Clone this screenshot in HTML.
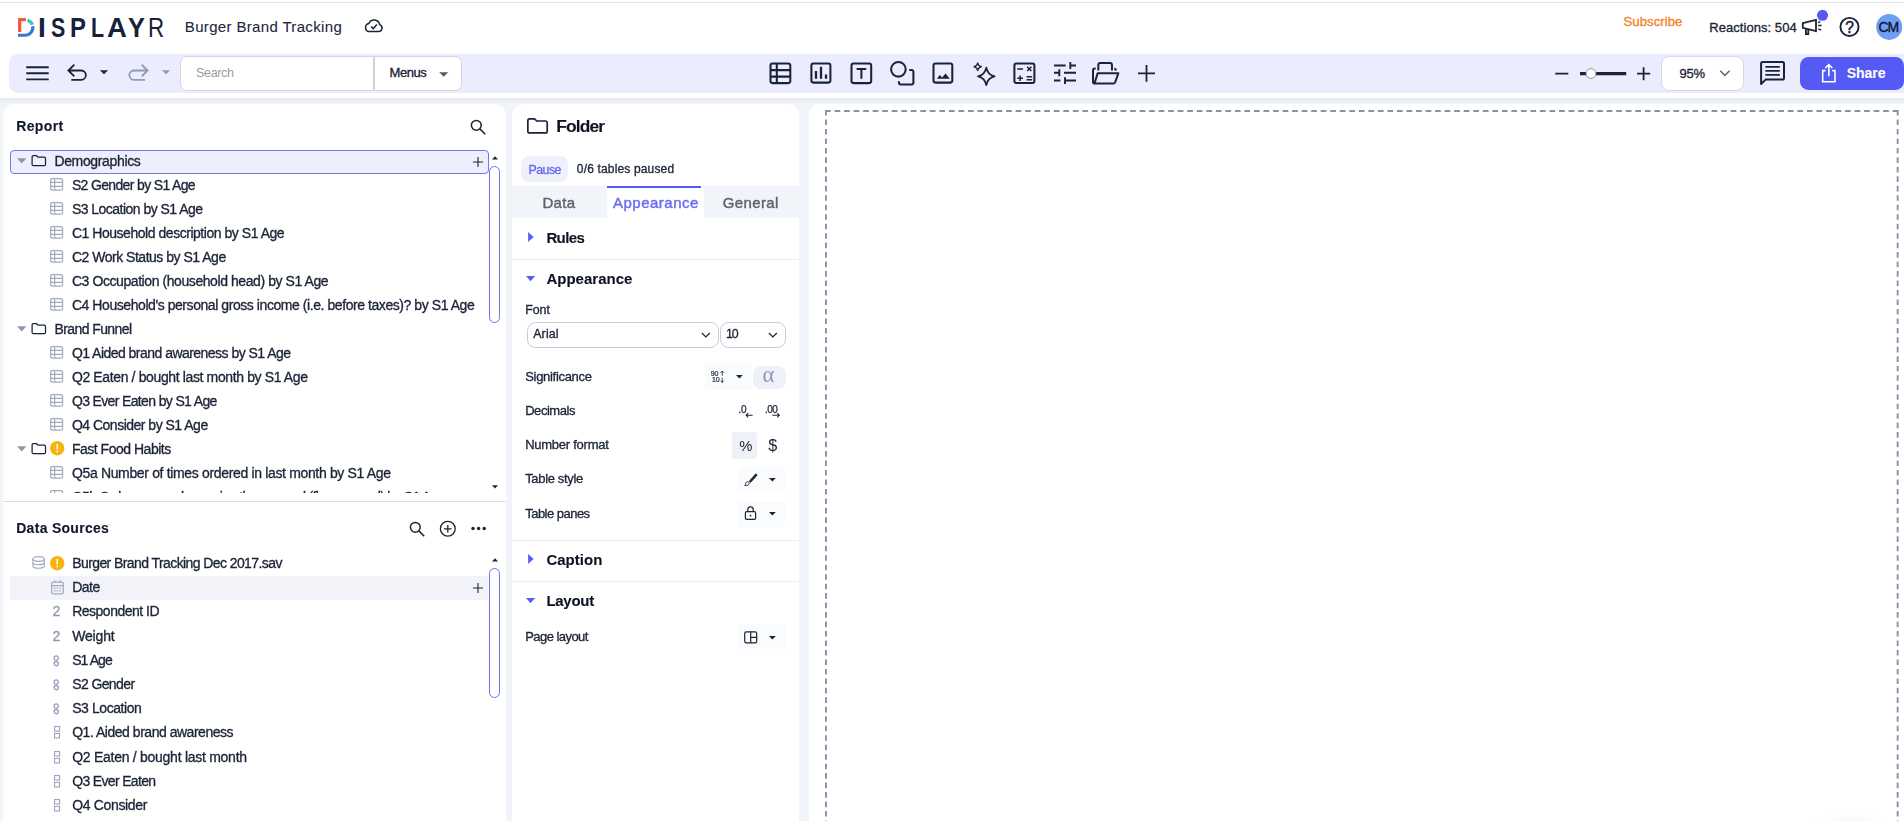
<!DOCTYPE html>
<html lang="en">
<head>
<meta charset="utf-8">
<title>Burger Brand Tracking - Displayr</title>
<style>
*{box-sizing:border-box;margin:0;padding:0}
html,body{width:1904px;height:821px;overflow:hidden;background:#fff}
body{font-family:"Liberation Sans",sans-serif;color:#1b2336;position:relative}
.abs{position:absolute}
svg{display:block;overflow:visible;position:absolute}
.t{position:absolute;white-space:nowrap;line-height:1;-webkit-text-stroke:0.32px currentColor}
#topline{left:0;top:2px;width:1904px;height:1px;background:#e0e2e0}
#toolbar{left:9px;top:54px;width:1900px;height:39px;background:#ebecfd;border-radius:9px 0 0 9px}
#bg{left:0;top:98px;width:1904px;height:730px;background:linear-gradient(#e6e9ee 0,#eef1f6 4px,#f1f4f9 7px,#f1f4f9 100%)}
.panel{position:absolute;background:#fff;border-radius:11px 11px 0 0;top:104px;height:730px}
#left{left:3px;width:503px}
#mid{left:512px;width:287px}
#canvas{left:809px;width:1110px;border-radius:11px 0 0 0}
.hr{position:absolute;height:1px;background:#eceef3}
#leftc,#midc{position:absolute;left:0;top:0;width:1904px;height:821px;will-change:transform}
.logo{position:absolute;left:0;top:13.74px;font-size:27.25px;line-height:1;color:#17213a;white-space:nowrap}
.logo span{position:absolute;top:0;transform-origin:0 0;display:block}
</style>
</head>
<body>
<div id="topline" class="abs"></div>
<div id="header">
<svg style="left:0;top:0" width="180" height="50" viewBox="0 0 180 50">
<path d="M25.9,19.6 H19.7 V32" fill="none" stroke="#ef5a41" stroke-width="3.3"/>
<path d="M27.46,20.03 A7.8,7.8 0 0 1 32.38,24.78" fill="none" stroke="#41c6c0" stroke-width="3.4"/>
<path d="M32.75,26.23 A7.8,7.8 0 0 1 25.05,35.25 H18" fill="none" stroke="#3f76d2" stroke-width="3.2"/>

</svg>
<div class="logo" aria-label="DISPLAYR"><span style="left:38.24px;transform:scaleX(1.03);font-weight:700">I</span><span style="left:51.36px;transform:scaleX(0.785);font-weight:700">S</span><span style="left:70.14px;transform:scaleX(0.875);font-weight:700">P</span><span style="left:90.6px;transform:scaleX(0.785);font-weight:700">L</span><span style="left:107.4px;transform:scaleX(1.01);font-weight:700">A</span><span style="left:127.7px;transform:scaleX(0.93);font-weight:700">Y</span><span style="left:147.9px;transform:scaleX(0.82);font-weight:400">R</span></div>
<div class="t" style="left:184.8px;top:19.0px;font-size:15px;letter-spacing:0.344px;color:#1b2540;-webkit-text-stroke:0.08px currentColor;">Burger Brand Tracking</div>
<svg style="left:364px;top:17px" width="20" height="18" viewBox="0 0 20 18"><path d="M5.2,14.6 H14.6 A3.6,3.6 0 0 0 15.6,7.6 A5.6,5.6 0 0 0 4.9,6.5 A4.1,4.1 0 0 0 5.2,14.6 Z" fill="none" stroke="#1b2336" stroke-width="1.5" stroke-linejoin="round"/><path d="M7.2,9.6 L9.3,11.6 L12.9,7.6" fill="none" stroke="#1b2336" stroke-width="1.5"/></svg>
<div class="t" style="left:1623.5px;top:14.6px;font-size:13.2px;letter-spacing:0.038px;color:#f5821f;">Subscribe</div>
<div class="t" style="left:1709.3px;top:20.8px;font-size:13px;letter-spacing:0.048px;">Reactions: 504</div>
<svg style="left:1795px;top:5px" width="109" height="45" viewBox="1795 5 109 45"><path d="M1802.8,23.2 L1816,19.9 V31.2 L1802.8,27.9 Z M1805.9,28.8 V34.2 H1808.3 V29.4" fill="none" stroke="#1b2336" stroke-width="1.8" stroke-linejoin="miter"/><path d="M1818.2,22.5 L1820.2,21.7 M1818.2,25.4 H1821.6 M1818.2,28.9 L1821.2,30.1" stroke="#1b2336" stroke-width="1.5" fill="none"/><circle cx="1822.5" cy="15.3" r="5.55" fill="#5558f5"/><circle cx="1849.5" cy="26.9" r="9.05" fill="none" stroke="#1b2336" stroke-width="1.9"/><text x="1849.55" y="32.9" text-anchor="middle" font-family="Liberation Sans, sans-serif" font-size="15.6" fill="#1b2336" stroke="#1b2336" stroke-width="0.5">?</text><circle cx="1889.2" cy="26.9" r="13" fill="#6f9ef7"/></svg>
<div class="t" style="left:1878.4px;top:20.0px;font-size:14px;letter-spacing:-1.050px;color:#0e1628;">CM</div>
</div>
<div id="toolbar" class="abs"></div>
<svg style="left:0;top:50px" width="1904" height="50" viewBox="0 50 1904 50" fill="none" stroke="#1b2336" stroke-width="2.05">
<path d="M26.2,67.3 H48.7 M26.2,73.2 H48.7 M26.2,79.4 H48.7" stroke-width="1.9"/>
<path d="M74.3,64.7 L68.4,70.5 L74.3,76.3 M68.8,70.5 H81.2 A4.65,4.65 0 0 1 81.2,79.8 H71.3" stroke-width="1.8"/>
<path d="M99.9,70.2 H108.1 L104,74.3 Z" fill="#1b2336" stroke="none"/>
<path d="M141.7,64.7 L147.6,70.5 L141.7,76.3 M147.2,70.5 H134 A4.65,4.65 0 0 0 134,79.8 H145" stroke="#8e99b3" stroke-width="1.8"/>
<path d="M161.9,70.2 H170.1 L166,74.3 Z" fill="#8e99b3" stroke="none"/>
<rect x="770.5" y="63.4" width="19.8" height="19.7" rx="2"/>
<path d="M776.8,63.4 V83.1 M770.5,70.1 H790.3 M770.5,76.6 H790.3"/>
<rect x="811.4" y="63.4" width="19" height="19.2" rx="2"/>
<path d="M816,71 V78.8 M821,66.8 V78.8 M826,74.4 V78.8" stroke-width="2.3"/>
<rect x="851.5" y="63.4" width="19.7" height="19.7" rx="2"/>
<path d="M856.6,69 H866.2 M861.4,69 V78.8" stroke-width="2"/>
<circle cx="898.4" cy="69.3" r="7.3"/>
<path d="M909.2,70 H911.4 A2,2 0 0 1 913.4,72 V82.5 A2,2 0 0 1 911.4,84.5 H900.9 A2,2 0 0 1 898.9,82.5 V81.2"/>
<rect x="933.5" y="63.4" width="18.8" height="19.2" rx="2"/>
<path d="M936.8,78.8 L939.8,74.9 L942.2,77.6 L945.5,73.6 L949.8,78.8 Z" fill="#1b2336" stroke="none"/>
<path d="M986.3,67.6 C987.2,72.6 989.2,75 994.6,76.3 C989.2,77.6 987.2,80 986.3,85 C985.4,80 983.4,77.6 978,76.3 C983.4,75 985.4,72.6 986.3,67.6 Z" stroke-width="1.8" stroke-linejoin="round"/>
<path d="M977.7,62.8 C978.1,65.2 979,66.2 981.4,66.7 C979,67.2 978.1,68.2 977.7,70.6 C977.3,68.2 976.4,67.2 974,66.7 C976.4,66.2 977.3,65.2 977.7,62.8 Z" stroke-width="1.2" stroke-linejoin="round"/>
<rect x="1014.4" y="63.4" width="20" height="19.6" rx="2"/>
<path d="M1017.3,68.9 H1023 M1027.2,66.8 L1031.4,71 M1031.4,66.8 L1027.2,71 M1017.3,78.2 H1023 M1020.15,75.4 V81 M1026.6,76.8 H1032.2 M1026.6,79.7 H1032.2" stroke-width="1.5"/>
<path d="M1054,65.5 H1065.7 M1070.3,62 V69 M1070.3,65.5 H1076 M1054,72.7 H1059.3 M1059.3,69.3 V76.2 M1064,72.7 H1076 M1054,80.5 H1060.4 M1065,77.2 V83.9 M1065,80.5 H1076" stroke-width="1.9"/>
<path d="M1098.3,70.5 V65 A1.9,1.9 0 0 1 1100.2,63.1 H1110.05 A1.9,1.9 0 0 1 1111.95,65 V70.5" stroke-width="2"/>
<path d="M1095.7,68.6 H1094.9 A1.9,1.9 0 0 0 1093,70.5 V81.7 A1.9,1.9 0 0 0 1094.9,83.6 H1113.5 A1.7,1.7 0 0 0 1115.1,82.5 L1118.3,73.3 H1097.6 L1094.7,82.9" stroke-width="2" stroke-linejoin="round"/>
<path d="M1114.4,67.5 C1115.9,67.8 1116.8,69 1116.9,70.6 H1114.4 Z" fill="#1b2336" stroke="none"/>
<path d="M1138,73.4 H1155 M1146.5,65.1 V81.7" stroke-width="1.8"/>
<path d="M1555.2,73.7 H1568.3 M1637,73.7 H1650.2 M1643.6,67.2 V80.3" stroke-width="1.8"/>
<path d="M1580,73.6 H1626.2" stroke-width="3.2"/>
<circle cx="1591" cy="73.5" r="4.9" fill="#fff" stroke="#8d96aa" stroke-width="1"/>
<path d="M1761.1,84 V63.6 A1.6,1.6 0 0 1 1762.7,62 H1782.4 A1.6,1.6 0 0 1 1784,63.6 V78 A1.6,1.6 0 0 1 1782.4,79.6 H1765.6 Z" stroke-width="2" stroke-linejoin="round"/>
<path d="M1765.4,66.8 H1779.8 M1765.4,70.8 H1779.8 M1765.4,74.9 H1779.8" stroke-width="1.7"/>
</svg>
<div class="abs" style="left:180px;top:56px;width:282px;height:35px;background:#fff;border:1px solid #d3d6e4;border-radius:7px"></div>
<div class="abs" style="left:373px;top:57px;width:2px;height:33px;background:#d0d3df"></div>
<div class="t" style="left:196.0px;top:66.6px;font-size:12.6px;letter-spacing:-0.384px;color:#9c9ca3;-webkit-text-stroke:0;">Search</div><div class="t" style="left:389.6px;top:66.3px;font-size:13px;letter-spacing:-0.486px;">Menus</div><svg style="left:439px;top:72px" width="10" height="6"><path d="M0.2,0.3 H9.2 L4.7,4.8 Z" fill="#555a66"/></svg>
<div class="abs" style="left:1661px;top:56px;width:83px;height:35px;background:#fff;border:1px solid #d6d9e6;border-radius:8px"></div>
<div class="t" style="left:1679.6px;top:67.2px;font-size:13px;letter-spacing:-0.277px;">95%</div><svg style="left:1719px;top:69px" width="12" height="8"><path d="M1.2,1.7 L5.9,6.3 L10.6,1.7" fill="none" stroke="#666a73" stroke-width="1.6"/></svg>
<div class="abs" style="left:1800px;top:57px;width:103.6px;height:33px;background:#555af5;border-radius:8.5px"></div>
<svg style="left:1820px;top:62px" width="18" height="22" viewBox="1820 62 18 22"><path d="M1825.6,70.6 H1822.7 V81.8 H1835 V70.6 H1832.1 M1828.85,76.3 V64.8 M1825.4,68 L1828.85,64.6 L1832.3,68" fill="none" stroke="#fff" stroke-width="1.6"/></svg>
<div class="t" style="left:1846.8px;top:66.2px;font-size:14px;letter-spacing:-0.064px;font-weight:700;-webkit-text-stroke:0.1px currentColor;color:#fff;">Share</div>
<div id="bg" class="abs"></div>
<div id="left" class="panel"></div>
<div id="mid" class="panel"></div>
<div id="canvas" class="panel"></div>
<div id="leftc">
<div class="t" style="left:16.2px;top:119.0px;font-size:14px;letter-spacing:0.379px;font-weight:700;-webkit-text-stroke:0.1px currentColor;color:#10182c;">Report</div>
<svg style="left:470px;top:118.7px" width="17" height="17" viewBox="0 0 17 17"><circle cx="6.3" cy="6.3" r="4.9" fill="none" stroke="#1b2336" stroke-width="1.5"/><path d="M9.9,9.9 L15.2,15.2" stroke="#1b2336" stroke-width="1.6"/></svg>
<div class="abs" style="left:10.2px;top:150.2px;width:479px;height:23.6px;background:#eeeffc;border:1.2px solid #7376ef;border-radius:4px"></div>
<div class="abs" style="left:0;top:146px;width:489px;height:347.2px;overflow:hidden"><div class="abs" style="left:0;top:-146px">
<svg style="left:16.6px;top:158.4px" width="10" height="7"><path d="M0,0.2 H9.4 L4.7,5.5 Z" fill="#8e97ad"/></svg>
<svg style="left:31.2px;top:155.4px" width="16" height="12" viewBox="0 0 16 12"><path d="M1.1,1.9 A1.2,1.2 0 0 1 2.3,0.7 H5.6 L7.1,2.2 H13.3 A1.2,1.2 0 0 1 14.5,3.4 V9.5 A1.2,1.2 0 0 1 13.3,10.7 H2.3 A1.2,1.2 0 0 1 1.1,9.5 Z" fill="none" stroke="#1b2336" stroke-width="1.25"/></svg>
<div class="t" style="left:54.4px;top:154.0px;font-size:14px;letter-spacing:-0.347px;">Demographics</div>
<svg style="left:50.4px;top:178.0px" width="14" height="14" viewBox="0 0 14 14"><rect x="0.65" y="0.65" width="11.9" height="11.4" rx="1.3" fill="none" stroke="#a3abc0" stroke-width="1.3"/><path d="M4.6,0.65 V12.05 M0.65,4.45 H12.55 M0.65,8.3 H12.55" stroke="#a3abc0" stroke-width="1.2" fill="none"/></svg>
<div class="t" style="left:71.9px;top:178.0px;font-size:14px;letter-spacing:-0.649px;">S2 Gender by S1 Age</div>
<svg style="left:50.4px;top:202.0px" width="14" height="14" viewBox="0 0 14 14"><rect x="0.65" y="0.65" width="11.9" height="11.4" rx="1.3" fill="none" stroke="#a3abc0" stroke-width="1.3"/><path d="M4.6,0.65 V12.05 M0.65,4.45 H12.55 M0.65,8.3 H12.55" stroke="#a3abc0" stroke-width="1.2" fill="none"/></svg>
<div class="t" style="left:71.9px;top:202.0px;font-size:14px;letter-spacing:-0.527px;">S3 Location by S1 Age</div>
<svg style="left:50.4px;top:226.0px" width="14" height="14" viewBox="0 0 14 14"><rect x="0.65" y="0.65" width="11.9" height="11.4" rx="1.3" fill="none" stroke="#a3abc0" stroke-width="1.3"/><path d="M4.6,0.65 V12.05 M0.65,4.45 H12.55 M0.65,8.3 H12.55" stroke="#a3abc0" stroke-width="1.2" fill="none"/></svg>
<div class="t" style="left:71.9px;top:226.0px;font-size:14px;letter-spacing:-0.463px;">C1 Household description by S1 Age</div>
<svg style="left:50.4px;top:250.0px" width="14" height="14" viewBox="0 0 14 14"><rect x="0.65" y="0.65" width="11.9" height="11.4" rx="1.3" fill="none" stroke="#a3abc0" stroke-width="1.3"/><path d="M4.6,0.65 V12.05 M0.65,4.45 H12.55 M0.65,8.3 H12.55" stroke="#a3abc0" stroke-width="1.2" fill="none"/></svg>
<div class="t" style="left:71.9px;top:250.0px;font-size:14px;letter-spacing:-0.487px;">C2 Work Status by S1 Age</div>
<svg style="left:50.4px;top:274.0px" width="14" height="14" viewBox="0 0 14 14"><rect x="0.65" y="0.65" width="11.9" height="11.4" rx="1.3" fill="none" stroke="#a3abc0" stroke-width="1.3"/><path d="M4.6,0.65 V12.05 M0.65,4.45 H12.55 M0.65,8.3 H12.55" stroke="#a3abc0" stroke-width="1.2" fill="none"/></svg>
<div class="t" style="left:71.9px;top:274.0px;font-size:14px;letter-spacing:-0.422px;">C3 Occupation (household head) by S1 Age</div>
<svg style="left:50.4px;top:298.0px" width="14" height="14" viewBox="0 0 14 14"><rect x="0.65" y="0.65" width="11.9" height="11.4" rx="1.3" fill="none" stroke="#a3abc0" stroke-width="1.3"/><path d="M4.6,0.65 V12.05 M0.65,4.45 H12.55 M0.65,8.3 H12.55" stroke="#a3abc0" stroke-width="1.2" fill="none"/></svg>
<div class="t" style="left:71.9px;top:298.0px;font-size:14px;letter-spacing:-0.434px;">C4 Household's personal gross income (i.e. before taxes)? by S1 Age</div>
<svg style="left:16.6px;top:326.4px" width="10" height="7"><path d="M0,0.2 H9.4 L4.7,5.5 Z" fill="#8e97ad"/></svg>
<svg style="left:31.2px;top:323.4px" width="16" height="12" viewBox="0 0 16 12"><path d="M1.1,1.9 A1.2,1.2 0 0 1 2.3,0.7 H5.6 L7.1,2.2 H13.3 A1.2,1.2 0 0 1 14.5,3.4 V9.5 A1.2,1.2 0 0 1 13.3,10.7 H2.3 A1.2,1.2 0 0 1 1.1,9.5 Z" fill="none" stroke="#1b2336" stroke-width="1.25"/></svg>
<div class="t" style="left:54.4px;top:322.0px;font-size:14px;letter-spacing:-0.580px;">Brand Funnel</div>
<svg style="left:50.4px;top:346.0px" width="14" height="14" viewBox="0 0 14 14"><rect x="0.65" y="0.65" width="11.9" height="11.4" rx="1.3" fill="none" stroke="#a3abc0" stroke-width="1.3"/><path d="M4.6,0.65 V12.05 M0.65,4.45 H12.55 M0.65,8.3 H12.55" stroke="#a3abc0" stroke-width="1.2" fill="none"/></svg>
<div class="t" style="left:71.9px;top:346.0px;font-size:14px;letter-spacing:-0.530px;">Q1 Aided brand awareness by S1 Age</div>
<svg style="left:50.4px;top:370.0px" width="14" height="14" viewBox="0 0 14 14"><rect x="0.65" y="0.65" width="11.9" height="11.4" rx="1.3" fill="none" stroke="#a3abc0" stroke-width="1.3"/><path d="M4.6,0.65 V12.05 M0.65,4.45 H12.55 M0.65,8.3 H12.55" stroke="#a3abc0" stroke-width="1.2" fill="none"/></svg>
<div class="t" style="left:71.9px;top:370.0px;font-size:14px;letter-spacing:-0.370px;">Q2 Eaten / bought last month by S1 Age</div>
<svg style="left:50.4px;top:394.0px" width="14" height="14" viewBox="0 0 14 14"><rect x="0.65" y="0.65" width="11.9" height="11.4" rx="1.3" fill="none" stroke="#a3abc0" stroke-width="1.3"/><path d="M4.6,0.65 V12.05 M0.65,4.45 H12.55 M0.65,8.3 H12.55" stroke="#a3abc0" stroke-width="1.2" fill="none"/></svg>
<div class="t" style="left:71.9px;top:394.0px;font-size:14px;letter-spacing:-0.641px;">Q3 Ever Eaten by S1 Age</div>
<svg style="left:50.4px;top:418.0px" width="14" height="14" viewBox="0 0 14 14"><rect x="0.65" y="0.65" width="11.9" height="11.4" rx="1.3" fill="none" stroke="#a3abc0" stroke-width="1.3"/><path d="M4.6,0.65 V12.05 M0.65,4.45 H12.55 M0.65,8.3 H12.55" stroke="#a3abc0" stroke-width="1.2" fill="none"/></svg>
<div class="t" style="left:71.9px;top:418.0px;font-size:14px;letter-spacing:-0.501px;">Q4 Consider by S1 Age</div>
<svg style="left:16.6px;top:446.4px" width="10" height="7"><path d="M0,0.2 H9.4 L4.7,5.5 Z" fill="#8e97ad"/></svg>
<svg style="left:31.2px;top:443.4px" width="16" height="12" viewBox="0 0 16 12"><path d="M1.1,1.9 A1.2,1.2 0 0 1 2.3,0.7 H5.6 L7.1,2.2 H13.3 A1.2,1.2 0 0 1 14.5,3.4 V9.5 A1.2,1.2 0 0 1 13.3,10.7 H2.3 A1.2,1.2 0 0 1 1.1,9.5 Z" fill="none" stroke="#1b2336" stroke-width="1.25"/></svg>
<svg style="left:49.8px;top:441.3px" width="14.4" height="14.4" viewBox="0 0 14.4 14.4"><circle cx="7.2" cy="7.2" r="7.2" fill="#f7b40e"/><path d="M7.2,3.6 V8.2" stroke="#fff" stroke-width="1.5" stroke-linecap="round"/><circle cx="7.2" cy="10.6" r="0.9" fill="#fff"/></svg>
<div class="t" style="left:71.9px;top:442.0px;font-size:14px;letter-spacing:-0.482px;">Fast Food Habits</div>
<svg style="left:50.4px;top:466.0px" width="14" height="14" viewBox="0 0 14 14"><rect x="0.65" y="0.65" width="11.9" height="11.4" rx="1.3" fill="none" stroke="#a3abc0" stroke-width="1.3"/><path d="M4.6,0.65 V12.05 M0.65,4.45 H12.55 M0.65,8.3 H12.55" stroke="#a3abc0" stroke-width="1.2" fill="none"/></svg>
<div class="t" style="left:71.9px;top:466.0px;font-size:14px;letter-spacing:-0.341px;">Q5a Number of times ordered in last month by S1 Age</div>
<svg style="left:50.4px;top:490.0px" width="14" height="14" viewBox="0 0 14 14"><rect x="0.65" y="0.65" width="11.9" height="11.4" rx="1.3" fill="none" stroke="#a3abc0" stroke-width="1.3"/><path d="M4.6,0.65 V12.05 M0.65,4.45 H12.55 M0.65,8.3 H12.55" stroke="#a3abc0" stroke-width="1.2" fill="none"/></svg>
<div class="t" style="left:71.9px;top:490.0px;font-size:14px;letter-spacing:-0.719px;">Q5b Order more or less using the app and (flavour meal) by S1 Age</div>
</div></div>
<svg style="left:473px;top:157.2px" width="10" height="10" viewBox="0 0 10 10"><path d="M0,5 H10 M5,0 V10" stroke="#1b2336" stroke-width="1.1" fill="none"/></svg>
<svg style="left:491.6px;top:156.3px" width="7" height="4"><path d="M0,3.4 H6 L3,0.2 Z" fill="#1b2336"/></svg><div class="abs" style="left:489.2px;top:166.3px;width:11px;height:156.9px;border:1px solid #6e70ee;border-radius:5.5px;background:#fff"></div><svg style="left:491.6px;top:484.6px" width="7" height="4"><path d="M0,0.2 H6 L3,3.4 Z" fill="#1b2336"/></svg>
<div class="abs" style="left:3px;top:500.6px;width:503px;height:1px;background:#d9dde6"></div>
<div class="t" style="left:16.2px;top:521.0px;font-size:14px;letter-spacing:0.293px;font-weight:700;-webkit-text-stroke:0.1px currentColor;color:#10182c;">Data Sources</div>
<svg style="left:409px;top:521.3px" width="17" height="17" viewBox="0 0 17 17"><circle cx="6.3" cy="6.3" r="4.9" fill="none" stroke="#1b2336" stroke-width="1.5"/><path d="M9.9,9.9 L15.2,15.2" stroke="#1b2336" stroke-width="1.6"/></svg>
<svg style="left:438.5px;top:520px" width="18" height="18" viewBox="0 0 18 18"><circle cx="8.8" cy="8.8" r="7.4" fill="none" stroke="#1b2336" stroke-width="1.3"/><path d="M5,8.8 H12.6 M8.8,5 V12.6" stroke="#1b2336" stroke-width="1.3"/></svg>
<svg style="left:471px;top:526px" width="16" height="5"><circle cx="2" cy="2.5" r="1.7" fill="#1b2336"/><circle cx="7.6" cy="2.5" r="1.7" fill="#1b2336"/><circle cx="13.2" cy="2.5" r="1.7" fill="#1b2336"/></svg>
<div class="abs" style="left:10px;top:576px;width:478.2px;height:23.8px;background:#f1f3f8"></div>
<svg style="left:32.2px;top:556.4px" width="14" height="14" viewBox="0 0 14 14"><ellipse cx="6.6" cy="3" rx="5.7" ry="2.3" fill="none" stroke="#a3abc0" stroke-width="1.2"/><path d="M0.9,3 V10 C0.9,13 12.3,13 12.3,10 V3 M0.9,6.5 C0.9,9.3 12.3,9.3 12.3,6.5" fill="none" stroke="#a3abc0" stroke-width="1.2"/></svg>
<svg style="left:49.8px;top:555.5px" width="14.4" height="14.4" viewBox="0 0 14.4 14.4"><circle cx="7.2" cy="7.2" r="7.2" fill="#f7b40e"/><path d="M7.2,3.6 V8.2" stroke="#fff" stroke-width="1.5" stroke-linecap="round"/><circle cx="7.2" cy="10.6" r="0.9" fill="#fff"/></svg>
<div class="t" style="left:72.2px;top:556.0px;font-size:14px;letter-spacing:-0.585px;">Burger Brand Tracking Dec 2017.sav</div>
<svg style="left:50.6px;top:579.6px" width="14" height="15" viewBox="0 0 14 15"><rect x="0.7" y="2" width="11.6" height="11.8" rx="1.6" fill="none" stroke="#a3abc0" stroke-width="1.25"/><path d="M0.7,5.6 H12.3 M3.7,0.2 V2.8 M9.3,0.2 V2.8" stroke="#a3abc0" stroke-width="1.25"/><path d="M2.9,8.2 H4.5 M5.7,8.2 H7.3 M8.5,8.2 H10.1 M2.9,10.9 H4.5 M5.7,10.9 H7.3 M8.5,10.9 H10.1" stroke="#a3abc0" stroke-width="1.3"/></svg>
<div class="t" style="left:72.2px;top:580.0px;font-size:14px;letter-spacing:-0.520px;">Date</div>
<svg style="left:473px;top:583.2px" width="10" height="10" viewBox="0 0 10 10"><path d="M0,5 H10 M5,0 V10" stroke="#1b2336" stroke-width="1.1" fill="none"/></svg>
<div class="t" style="left:52.5px;top:604.0px;font-size:14px;letter-spacing:0.000px;color:#8f99b2;">2</div>
<div class="t" style="left:72.2px;top:604.0px;font-size:14px;letter-spacing:-0.500px;">Respondent ID</div>
<div class="t" style="left:52.5px;top:629.0px;font-size:14px;letter-spacing:0.000px;color:#8f99b2;">2</div>
<div class="t" style="left:72.2px;top:629.0px;font-size:14px;letter-spacing:-0.171px;">Weight</div>
<svg style="left:53.4px;top:654.6px" width="8" height="12" viewBox="0 0 8 12"><circle cx="3.2" cy="2.95" r="2.15" fill="none" stroke="#939cb4" stroke-width="1.3"/><circle cx="3.2" cy="8.6" r="2.15" fill="none" stroke="#939cb4" stroke-width="1.3"/></svg>
<div class="t" style="left:72.2px;top:653.0px;font-size:14px;letter-spacing:-0.926px;">S1 Age</div>
<svg style="left:53.4px;top:678.6px" width="8" height="12" viewBox="0 0 8 12"><circle cx="3.2" cy="2.95" r="2.15" fill="none" stroke="#939cb4" stroke-width="1.3"/><circle cx="3.2" cy="8.6" r="2.15" fill="none" stroke="#939cb4" stroke-width="1.3"/></svg>
<div class="t" style="left:72.2px;top:677.0px;font-size:14px;letter-spacing:-0.602px;">S2 Gender</div>
<svg style="left:53.4px;top:702.6px" width="8" height="12" viewBox="0 0 8 12"><circle cx="3.2" cy="2.95" r="2.15" fill="none" stroke="#939cb4" stroke-width="1.3"/><circle cx="3.2" cy="8.6" r="2.15" fill="none" stroke="#939cb4" stroke-width="1.3"/></svg>
<div class="t" style="left:72.2px;top:701.0px;font-size:14px;letter-spacing:-0.423px;">S3 Location</div>
<svg style="left:54px;top:726px" width="8" height="14" viewBox="0 0 8 14"><rect x="0.55" y="0.55" width="5" height="4.5" fill="none" stroke="#9da6bc" stroke-width="1.15"/><rect x="0.55" y="7.45" width="5" height="4.5" fill="none" stroke="#9da6bc" stroke-width="1.15"/></svg>
<div class="t" style="left:72.2px;top:725.0px;font-size:14px;letter-spacing:-0.475px;">Q1. Aided brand awareness</div>
<svg style="left:54px;top:751px" width="8" height="14" viewBox="0 0 8 14"><rect x="0.55" y="0.55" width="5" height="4.5" fill="none" stroke="#9da6bc" stroke-width="1.15"/><rect x="0.55" y="7.45" width="5" height="4.5" fill="none" stroke="#9da6bc" stroke-width="1.15"/></svg>
<div class="t" style="left:72.2px;top:750.0px;font-size:14px;letter-spacing:-0.269px;">Q2 Eaten / bought last month</div>
<svg style="left:54px;top:775px" width="8" height="14" viewBox="0 0 8 14"><rect x="0.55" y="0.55" width="5" height="4.5" fill="none" stroke="#9da6bc" stroke-width="1.15"/><rect x="0.55" y="7.45" width="5" height="4.5" fill="none" stroke="#9da6bc" stroke-width="1.15"/></svg>
<div class="t" style="left:72.2px;top:774.0px;font-size:14px;letter-spacing:-0.656px;">Q3 Ever Eaten</div>
<svg style="left:54px;top:799px" width="8" height="14" viewBox="0 0 8 14"><rect x="0.55" y="0.55" width="5" height="4.5" fill="none" stroke="#9da6bc" stroke-width="1.15"/><rect x="0.55" y="7.45" width="5" height="4.5" fill="none" stroke="#9da6bc" stroke-width="1.15"/></svg>
<div class="t" style="left:72.2px;top:798.0px;font-size:14px;letter-spacing:-0.336px;">Q4 Consider</div>
<svg style="left:491.6px;top:557.7px" width="7" height="4"><path d="M0,3.4 H6 L3,0.2 Z" fill="#1b2336"/></svg><div class="abs" style="left:489.2px;top:568.2px;width:11px;height:129.4px;border:1px solid #6e70ee;border-radius:5.5px;background:#fff"></div>
</div>
<div id="midc">
<svg style="left:527.3px;top:118.2px" width="22" height="16" viewBox="0 0 22 16"><path d="M0.85,2.6 A1.7,1.7 0 0 1 2.55,0.9 H7.6 L9.7,3 H18.5 A1.7,1.7 0 0 1 20.2,4.7 V13.2 A1.7,1.7 0 0 1 18.5,14.9 H2.55 A1.7,1.7 0 0 1 0.85,13.2 Z" fill="none" stroke="#1b2336" stroke-width="1.7"/></svg>
<div class="t" style="left:556.2px;top:118.0px;font-size:17.4px;letter-spacing:-0.857px;font-weight:700;-webkit-text-stroke:0.1px currentColor;color:#0c1222;">Folder</div>
<div class="abs" style="left:521px;top:156px;width:46.8px;height:25.7px;background:#eff1fa;border-radius:8px"></div>
<div class="t" style="left:528.6px;top:164.0px;font-size:12.4px;letter-spacing:-0.588px;color:#6568f2;">Pause</div>
<div class="t" style="left:576.8px;top:163.0px;font-size:12px;letter-spacing:0.162px;">0/6 tables paused</div>
<div class="abs" style="left:512px;top:185.9px;width:287px;height:31.9px;background:#f1f4f9"></div>
<div class="abs" style="left:606.9px;top:185.9px;width:97.2px;height:31.9px;background:#fff"></div>
<div class="abs" style="left:606.9px;top:185.8px;width:94.2px;height:2px;background:#5558f5"></div>
<div class="t" style="left:542.4px;top:195.0px;font-size:15px;letter-spacing:0.328px;color:#5e6168;-webkit-text-stroke:0.4px currentColor;">Data</div>
<div class="t" style="left:613.0px;top:195.0px;font-size:15px;letter-spacing:0.489px;color:#686bf3;-webkit-text-stroke:0.4px currentColor;">Appearance</div>
<div class="t" style="left:722.8px;top:195.0px;font-size:15px;letter-spacing:0.375px;color:#5e6168;-webkit-text-stroke:0.4px currentColor;">General</div>
<svg style="left:527.8px;top:232.2px" width="6" height="10"><path d="M0.1,0 V10 L5.6,5 Z" fill="#5a5cf5"/></svg><div class="t" style="left:546.4px;top:230.0px;font-size:15px;letter-spacing:-0.612px;font-weight:700;-webkit-text-stroke:0.1px currentColor;color:#0c1222;">Rules</div>
<div class="hr" style="left:512px;width:287px;top:259px"></div>
<svg style="left:526px;top:275.8px" width="10" height="6"><path d="M0,0.1 H9.1 L4.55,5.3 Z" fill="#5a5cf5"/></svg><div class="t" style="left:546.4px;top:271.0px;font-size:15px;letter-spacing:0.013px;font-weight:700;-webkit-text-stroke:0.1px currentColor;color:#0c1222;">Appearance</div>
<div class="t" style="left:525.2px;top:304.0px;font-size:12.4px;letter-spacing:-0.049px;">Font</div>
<div class="abs" style="left:526.9px;top:322.3px;width:191.7px;height:25.3px;background:#fff;border:1px solid #c7cbd8;border-radius:8.5px"></div>
<div class="abs" style="left:720.2px;top:322.3px;width:65.4px;height:25.3px;background:#fff;border:1px solid #c7cbd8;border-radius:8.5px"></div>
<div class="t" style="left:533.2px;top:328.0px;font-size:12.4px;letter-spacing:0.161px;">Arial</div>
<div class="t" style="left:725.9px;top:328.0px;font-size:12.4px;letter-spacing:-1.098px;">10</div>
<svg style="left:700.7px;top:331.6px" width="10" height="7"><path d="M0.9,1 L4.85,4.9 L8.8,1" fill="none" stroke="#1b2336" stroke-width="1.2"/></svg>
<svg style="left:767.7px;top:331.6px" width="10" height="7"><path d="M0.9,1 L4.85,4.9 L8.8,1" fill="none" stroke="#1b2336" stroke-width="1.2"/></svg>
<div class="t" style="left:525.2px;top:370.0px;font-size:13px;letter-spacing:-0.301px;">Significance</div>
<div class="abs" style="left:705px;top:363.3px;width:47px;height:26.8px;background:#fafbfd"></div>
<svg style="left:709px;top:369px" width="18" height="15" viewBox="709 369 18 15"><text x="710.7" y="375.8" font-family="Liberation Sans, sans-serif" font-size="7" letter-spacing="-0.1" fill="#1b2336" stroke="#1b2336" stroke-width="0.2">90</text><text x="711.9" y="382.4" font-family="Liberation Sans, sans-serif" font-size="7" letter-spacing="-0.1" fill="#1b2336" stroke="#1b2336" stroke-width="0.2">10</text><path d="M722.2,375.8 V371.1 M720.6,372.7 L722.2,371 L723.8,372.7 M722.2,377.7 V382.4 M720.6,380.8 L722.2,382.5 L723.8,380.8" fill="none" stroke="#1b2336" stroke-width="0.85"/></svg>
<svg style="left:736.4px;top:375.2px" width="8" height="5"><path d="M0,0.1 H6.8 L3.4,3.6 Z" fill="#1b2336"/></svg>
<div class="abs" style="left:753.2px;top:366px;width:32.8px;height:23px;background:#eef1f8;border-radius:8px"></div>
<div class="t" style="left:762.6px;top:363.6px;font-size:22.5px;letter-spacing:0.000px;color:#8e9ab5;font-family:'Liberation Serif',serif;-webkit-text-stroke:0">α</div>
<div class="t" style="left:525.2px;top:404.0px;font-size:13px;letter-spacing:-0.459px;">Decimals</div>
<svg style="left:738px;top:403px" width="44" height="17" viewBox="738 403 44 17"><text x="738.6" y="412.5" font-family="Liberation Sans, sans-serif" font-size="10" fill="#1b2336" stroke="#1b2336" stroke-width="0.25" letter-spacing="-0.3">.0</text><path d="M752.6,415.3 H746.2 M748.3,413.2 L746.1,415.3 L748.3,417.4" fill="none" stroke="#1b2336" stroke-width="1.05"/><text x="765" y="412.5" font-family="Liberation Sans, sans-serif" font-size="10" fill="#1b2336" stroke="#1b2336" stroke-width="0.25" letter-spacing="-0.55">.00</text><path d="M772.4,415.3 H779.3 M777.2,413.2 L779.4,415.3 L777.2,417.4" fill="none" stroke="#1b2336" stroke-width="1.05"/></svg>
<div class="t" style="left:525.2px;top:438.0px;font-size:13px;letter-spacing:-0.254px;">Number format</div>
<div class="abs" style="left:732.1px;top:432.2px;width:24.8px;height:26.5px;background:#eef1f8;border-radius:3px"></div>
<div class="t" style="left:739.3px;top:439.0px;font-size:14.8px;letter-spacing:-0.572px;-webkit-text-stroke:0;">%</div>
<div class="t" style="left:768.3px;top:437.0px;font-size:16.2px;letter-spacing:-0.616px;-webkit-text-stroke:0;">$</div>
<div class="t" style="left:525.2px;top:472.0px;font-size:13px;letter-spacing:-0.338px;">Table style</div>
<div class="abs" style="left:738.2px;top:467.3px;width:46.5px;height:24.8px;background:#fafbfd"></div>
<svg style="left:743px;top:472px" width="16" height="16" viewBox="743 472 16 16"><path d="M749.6,481 L755.9,474.2 L756.9,475.1 L750.7,482 Z" fill="#1b2336" stroke="#1b2336" stroke-width="1.1" stroke-linejoin="round"/><path d="M747.6,481.6 C746.4,481.6 745.8,482.6 745.8,483.6 C745.8,484.4 745.4,485 744.7,485.4 C746.8,485.9 749.2,485.2 749.2,483.2 C749.2,482.3 748.5,481.6 747.6,481.6 Z" fill="none" stroke="#1b2336" stroke-width="0.9"/></svg>
<svg style="left:769px;top:478.2px" width="8" height="5"><path d="M0,0.1 H6.8 L3.4,3.6 Z" fill="#1b2336"/></svg>
<div class="t" style="left:525.2px;top:507.0px;font-size:13px;letter-spacing:-0.520px;">Table panes</div>
<div class="abs" style="left:738.2px;top:501.5px;width:46.5px;height:25.6px;background:#fafbfd"></div>
<svg style="left:743px;top:505px" width="16" height="17" viewBox="743 505 16 17"><rect x="745.4" y="511.6" width="10.2" height="7.8" rx="1.3" fill="none" stroke="#1b2336" stroke-width="1.2"/><path d="M747.8,511.6 V509.6 A2.7,2.7 0 0 1 753.2,509.6 V511.6" fill="none" stroke="#1b2336" stroke-width="1.2"/><circle cx="750.5" cy="515.6" r="0.95" fill="#1b2336"/></svg>
<svg style="left:769px;top:511.8px" width="8" height="5"><path d="M0,0.1 H6.8 L3.4,3.6 Z" fill="#1b2336"/></svg>
<div class="hr" style="left:512px;width:287px;top:540px"></div>
<svg style="left:527.8px;top:554.2px" width="6" height="10"><path d="M0.1,0 V10 L5.6,5 Z" fill="#5a5cf5"/></svg><div class="t" style="left:546.4px;top:552.0px;font-size:15px;letter-spacing:0.025px;font-weight:700;-webkit-text-stroke:0.1px currentColor;color:#0c1222;">Caption</div>
<div class="hr" style="left:512px;width:287px;top:581.2px"></div>
<svg style="left:526px;top:597.8px" width="10" height="6"><path d="M0,0.1 H9.1 L4.55,5.3 Z" fill="#5a5cf5"/></svg><div class="t" style="left:546.4px;top:593.0px;font-size:15px;letter-spacing:-0.262px;font-weight:700;-webkit-text-stroke:0.1px currentColor;color:#0c1222;">Layout</div>
<div class="t" style="left:525.2px;top:630.0px;font-size:13px;letter-spacing:-0.543px;">Page layout</div>
<div class="abs" style="left:738px;top:624.4px;width:46.8px;height:24.6px;background:#fafbfd"></div>
<svg style="left:743px;top:630px" width="16" height="15" viewBox="743 630 16 15"><rect x="744.7" y="631.8" width="12" height="11" rx="1.6" fill="none" stroke="#1b2336" stroke-width="1.2"/><path d="M750.7,631.8 V642.8 M750.7,637.3 H756.7" fill="none" stroke="#1b2336" stroke-width="1.2"/></svg>
<svg style="left:769.3px;top:635.5px" width="8" height="5"><path d="M0,0.1 H6.8 L3.4,3.6 Z" fill="#1b2336"/></svg>
</div>
<div id="canvasc">
<svg style="left:809px;top:104px" width="1095" height="717" viewBox="809 104 1095 717" fill="none" stroke="#8791ab" stroke-width="1.9"><path d="M825,110.95 H1898.6" stroke-dasharray="5.7 3.833"/><path d="M825.95,110 V840" stroke-dasharray="5.6 3.873"/><path d="M1897.65,110 V840" stroke-dasharray="5.6 3.873"/></svg>
<div class="abs" style="left:1790px;top:800px;width:124px;height:60px;background:radial-gradient(ellipse 52px 24px at 62px 36px,rgba(20,30,60,0.05),rgba(20,30,60,0.025) 60%,rgba(20,30,60,0) 100%)"></div>
</div>
</body>
</html>
